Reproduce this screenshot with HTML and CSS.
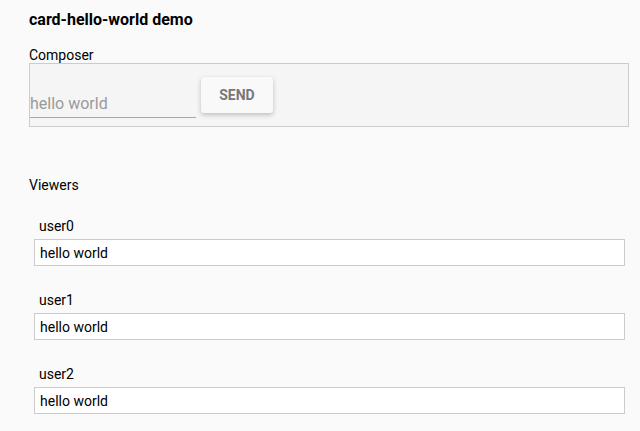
FILE: index.html
```html
<!DOCTYPE html>
<html>
<head>
<meta charset="utf-8">
<link rel="stylesheet" href="styles.css">
</head>
<body>
<div class="page">
  <h1 class="title">card-hello-world demo</h1>
  <div class="section-label">Composer</div>
  <div class="composer">
    <input class="compose-input" type="text" placeholder="hello world">
    <button class="send-btn">SEND</button>
  </div>
  <div class="section-label viewers-label">Viewers</div>
  <div class="viewers">
    <div class="viewer">
      <div class="viewer-name">user0</div>
      <input class="viewer-input" type="text" value="hello world">
    </div>
    <div class="viewer">
      <div class="viewer-name">user1</div>
      <input class="viewer-input" type="text" value="hello world">
    </div>
    <div class="viewer">
      <div class="viewer-name">user2</div>
      <input class="viewer-input" type="text" value="hello world">
    </div>
  </div>
</div>
</body>
</html>
```

FILE: styles.css
```css
html, body {
  margin: 0;
  padding: 0;
  background: #fafafa;
  font-family: Roboto, "Liberation Sans", sans-serif;
  color: #000;
}

.page {
  padding: 10px 11px 0 29px;
}

.title {
  margin: 0;
  font-size: 16px;
  font-weight: bold;
  line-height: 20px;
}

.section-label {
  margin-top: 17px;
  font-size: 14px;
  line-height: 16px;
}

.composer {
  display: flex;
  align-items: flex-end;
  border: 1px solid #cccccc;
  background: #f5f5f5;
  padding: 13px 0 8px 0;
  height: 41px;
  box-sizing: content-box;
}

.compose-input {
  width: 166px;
  height: 28px;
  box-sizing: border-box;
  margin: 0;
  padding: 0;
  border: none;
  border-bottom: 1px solid #a8a8a8;
  background: transparent;
  font-family: Roboto, "Liberation Sans", sans-serif;
  font-size: 16px;
  color: #000;
  outline: none;
}

.compose-input::placeholder {
  color: #9a9a9a;
}

.send-btn {
  margin: 0 0 5px 5px;
  width: 72px;
  height: 36px;
  border: none;
  border-radius: 3px;
  background: #f9f9f9;
  box-shadow: 0 2px 5px rgba(0, 0, 0, 0.22), 0 0 1px rgba(0, 0, 0, 0.08);
  font-family: Roboto, "Liberation Sans", sans-serif;
  font-size: 14px;
  font-weight: bold;
  color: #777777;
  padding: 0;
}

.viewers-label {
  margin-top: 50px;
}

.viewers {
  display: flex;
  flex-direction: column;
  gap: 26px;
  padding: 25px 4px 0 5px;
}

.viewer {
  display: flex;
  flex-direction: column;
}

.viewer-name {
  font-size: 14px;
  line-height: 16px;
  padding-left: 5px;
  margin-bottom: 5px;
}

.viewer-input {
  height: 27px;
  box-sizing: border-box;
  margin: 0;
  border: 1px solid #cccccc;
  background: #fff;
  padding: 0 5px;
  font-family: Roboto, "Liberation Sans", sans-serif;
  font-size: 14px;
  color: #000;
  outline: none;
  width: 100%;
}
```
